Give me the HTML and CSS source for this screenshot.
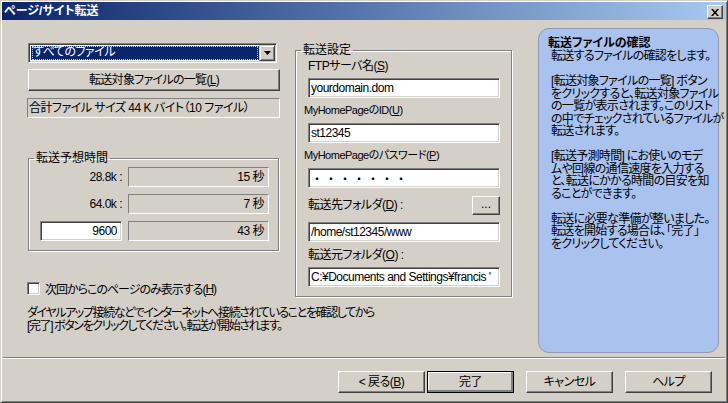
FILE: index.html
```html
<!DOCTYPE html>
<html lang="ja">
<head>
    <meta charset="UTF-8">
    <title>ページ/サイト転送</title>
    <link rel="stylesheet" href="styles.css">
</head>
<body>
    <div class="window">
        <div class="titlebar">
            <span class="title">ページ/サイト転送</span>
            <span class="close">
                <svg width="8" height="7" viewBox="0 0 8 7"><path d="M0 0h2l2 2.5L6 0h2L5 3.5 8 7H6L4 4.5 2 7H0l3-3.5z" fill="#000"/></svg>
            </span>
        </div>

        <div class="body">
            <div class="main">
                <div class="upper">
                    <div class="left-col">
                        <div class="combo">
                            <span class="combo-value"><span class="combo-focus">すべてのファイル</span></span>
                            <span class="combo-arrow">
                                <svg width="7" height="4" viewBox="0 0 7 4"><path d="M0 0h7L3.5 4z" fill="#000"/></svg>
                            </span>
                        </div>
                        <button class="btn btn-list">転送対象ファイルの一覧(<u>L</u>)</button>
                        <div class="summary">合計ファイル サイズ 44 K バイト（10 ファイル）</div>

                        <fieldset class="group estimate">
                            <legend>転送予想時間</legend>
                            <div class="est-row">
                                <span class="est-label">28.8k :</span>
                                <span class="est-value">15 秒</span>
                            </div>
                            <div class="est-row">
                                <span class="est-label">64.0k :</span>
                                <span class="est-value">7 秒</span>
                            </div>
                            <div class="est-row">
                                <input class="field est-input" type="text" value="9600">
                                <span class="est-value">43 秒</span>
                            </div>
                        </fieldset>

                        <label class="check">
                            <span class="check-box"></span>
                            次回からこのページのみ表示する(<u>H</u>)
                        </label>
                    </div>

                    <fieldset class="group settings">
                        <legend>転送設定</legend>
                        <div class="lbl">FTPサーバ名(<u>S</u>)</div>
                        <input class="field" type="text" value="yourdomain.dom">
                        <div class="lbl lbl-small">MyHomePageのID(<u>U</u>)</div>
                        <input class="field" type="text" value="st12345">
                        <div class="lbl lbl-small">MyHomePageのパスワード(<u>P</u>)</div>
                        <input class="field field-pass" type="text" value="・・・・・・・">
                        <div class="lbl-row">
                            <span class="lbl">転送先フォルダ(<u>D</u>) :</span>
                            <button class="btn btn-browse">...</button>
                        </div>
                        <input class="field" type="text" value="/home/st12345/www">
                        <div class="lbl">転送元フォルダ(<u>O</u>) :</div>
                        <input class="field" type="text" value="C:¥Documents and Settings¥francis '">
                    </fieldset>
                </div>

                <p class="note">ダイヤルアップ接続などでインターネットへ接続されていることを確認してから<br>[完了] ボタンをクリックしてください。転送が開始されます。</p>
            </div>

            <div class="help">
                <h2>転送ファイルの確認</h2>
                <p>転送するファイルの確認をします。</p>
                <p>[転送対象ファイルの一覧] ボタン<br>をクリックすると、転送対象ファイル<br>の一覧が表示されます。このリスト<br>の中でチェックされているファイルが<br>転送されます。</p>
                <p>[転送予測時間] にお使いのモデ<br>ムや回線の通信速度を入力する<br>と、転送にかかる時間の目安を知<br>ることができます。</p>
                <p>転送に必要な準備が整いました。<br>転送を開始する場合は、「完了」<br>をクリックしてください。</p>
            </div>
        </div>

        <div class="separator"></div>

        <div class="buttons">
            <button class="btn btn-nav">&lt; 戻る(<u>B</u>)</button>
            <button class="btn btn-nav btn-default">完了</button>
            <button class="btn btn-nav btn-gap">キャンセル</button>
            <button class="btn btn-nav btn-gap">ヘルプ</button>
        </div>
    </div>
</body>
</html>
```

FILE: styles.css
```css
:root {
    --face: #d4d0c8;
    --shadow: #808080;
    --dark: #404040;
    --help-bg: #a9c3ee;
}

* {
    margin: 0;
    padding: 0;
    box-sizing: border-box;
}

body {
    background: var(--face);
    font-family: 'Liberation Sans', 'Noto Sans CJK JP', sans-serif;
    font-size: 12px;
    font-feature-settings: "palt";
    letter-spacing: -0.5px;
    color: #000;
}

u {
    text-decoration: underline;
    text-underline-offset: 1px;
}

/* ウィンドウ枠 */
.window {
    width: 728px;
    height: 403px;
    background: var(--face);
    border: 1px solid;
    border-color: var(--face) var(--dark) var(--dark) var(--face);
    box-shadow: inset 1px 1px 0 #fff, inset -1px -1px 0 var(--shadow);
    padding: 1px;
    display: flex;
    flex-direction: column;
}

.titlebar {
    height: 18px;
    background: linear-gradient(90deg, #0a246a, #a6caf0);
    display: flex;
    justify-content: space-between;
    align-items: flex-start;
    padding: 0 3px 0 2px;
}

.title {
    color: #fff;
    font-weight: bold;
    line-height: 18px;
    letter-spacing: 0;
}

.close {
    width: 16px;
    height: 14px;
    margin-top: 3px;
    background: var(--face);
    border: 1px solid;
    border-color: #fff var(--dark) var(--dark) #fff;
    box-shadow: inset -1px -1px 0 var(--shadow);
    display: flex;
    align-items: center;
    justify-content: center;
}

/* 本体 */
.body {
    height: 337px;
    display: flex;
    padding: 8px 0 0 25px;
}

.main {
    width: 486px;
    padding-top: 15px;
}

.upper {
    display: flex;
    align-items: flex-start;
}

.left-col {
    width: 253px;
}

/* コンボボックス */
.combo {
    width: 249px;
    height: 20px;
    margin-left: 1px;
    background: #fff;
    border: 1px solid;
    border-color: var(--shadow) #fff #fff var(--shadow);
    box-shadow: inset 1px 1px 0 var(--dark), inset -1px -1px 0 var(--face);
    display: flex;
    padding: 2px;
}

.combo-value {
    flex: 1;
    background: #0a246a;
    padding: 0 1px;
}

.combo-focus {
    display: block;
    height: 100%;
    color: #fff;
    line-height: 13px;
    outline: 1px dotted #d4d0c8;
    outline-offset: -1px;
    padding-left: 1px;
}

.combo-arrow {
    width: 16px;
    background: var(--face);
    border: 1px solid;
    border-color: var(--face) var(--dark) var(--dark) var(--face);
    box-shadow: inset 1px 1px 0 #fff, inset -1px -1px 0 var(--shadow);
    display: flex;
    align-items: center;
    justify-content: center;
    margin: -1px -1px -1px 0;
}

/* ボタン */
.btn {
    font: inherit;
    letter-spacing: inherit;
    font-feature-settings: "palt";
    color: #000;
    background: var(--face);
    border: 1px solid;
    border-color: #fff var(--dark) var(--dark) #fff;
    box-shadow: inset -1px -1px 0 var(--shadow), inset 1px 1px 0 var(--face);
    display: flex;
    align-items: center;
    justify-content: center;
    line-height: 14px;
}

.btn-list {
    width: 252px;
    height: 22px;
    margin: 6px 0 0 1px;
    letter-spacing: -0.7px;
}

.summary {
    height: 20px;
    margin-top: 7px;
    line-height: 18px;
    padding-left: 1px;
    border: 1px solid;
    border-color: var(--shadow) #fff #fff var(--shadow);
    white-space: nowrap;
}

/* グループ枠 */
.group {
    border: 1px solid var(--shadow);
    box-shadow: inset 1px 1px 0 #fff, 1px 1px 0 #fff;
    min-inline-size: 0;
}

.group legend {
    line-height: 14px;
    padding: 0 2px;
    margin-left: -6px;
    letter-spacing: 0;
}

.estimate {
    width: 251px;
    margin: 33px 0 0 1px;
    padding: 2px 9px 9px 11px;
}

.est-row {
    display: flex;
    align-items: center;
    height: 20px;
}

.est-row + .est-row {
    margin-top: 7px;
}

.est-label {
    width: 82px;
    text-align: right;
}

.est-value {
    width: 141px;
    height: 20px;
    margin-left: 6px;
    border: 1px solid;
    border-color: var(--shadow) #fff #fff var(--shadow);
    text-align: right;
    line-height: 18px;
    padding-right: 4px;
}

.field {
    display: block;
    font: inherit;
    letter-spacing: inherit;
    font-feature-settings: "palt";
    color: #000;
    background: #fff;
    height: 20px;
    border: 1px solid;
    border-color: var(--shadow) #fff #fff var(--shadow);
    box-shadow: inset 1px 1px 0 var(--dark), inset -1px -1px 0 var(--face);
    padding: 0 2px;
    outline: none;
}

.est-input {
    width: 82px;
    text-align: right;
    padding-right: 4px;
}

/* チェックボックス */
.check {
    display: flex;
    align-items: center;
    height: 13px;
    margin-top: 31px;
    white-space: nowrap;
    letter-spacing: -1px;
}

.check-box {
    width: 13px;
    height: 13px;
    margin-right: 5px;
    background: #fff;
    border: 1px solid;
    border-color: var(--shadow) #fff #fff var(--shadow);
    box-shadow: inset 1px 1px 0 var(--dark), inset -1px -1px 0 var(--face);
}

/* 転送設定 */
.settings {
    width: 217px;
    margin-left: 15px;
    padding: 2px 12px 9px 11px;
}

.settings .field {
    width: 192px;
    margin-left: 1px;
}

.lbl {
    line-height: 14px;
    white-space: nowrap;
}

.settings > .lbl {
    margin-left: 1px;
}

.lbl-small {
    font-size: 11px;
    margin-left: -3px !important;
}

.settings .lbl + .field {
    margin-top: 5px;
}

.settings .field + .lbl {
    margin-top: 5px;
}

.settings .lbl-small + .field {
    margin-top: 6px;
}

.field-pass {
    font-feature-settings: normal;
    letter-spacing: 2px;
}

.lbl-row {
    display: flex;
    justify-content: space-between;
    align-items: center;
    height: 22px;
    margin: 6px 0 6px 1px;
}

.btn-browse {
    width: 28px;
    height: 19px;
    margin-right: -1px;
    line-height: 10px;
    align-items: flex-end;
    padding-bottom: 5px;
    letter-spacing: 0;
}

.settings .lbl-row + .field + .lbl {
    margin-top: 6px;
}

.note {
    margin-top: 10px;
    line-height: 13px;
    white-space: nowrap;
    letter-spacing: -1.4px;
}

/* ヘルプパネル */
.help {
    width: 181px;
    height: 325px;
    margin-left: 25px;
    background: var(--help-bg);
    border: 1px solid #8c9ab8;
    border-radius: 11px;
    padding: 7px 4px 0 9px;
}

.help h2 {
    font-size: 12px;
    font-weight: bold;
    line-height: 14px;
    letter-spacing: 0;
}

.help p {
    line-height: 12.5px;
    margin-left: 3px;
    margin-bottom: 12.5px;
    white-space: nowrap;
    letter-spacing: -0.7px;
}

/* 下部ボタン */
.separator {
    height: 2px;
    margin: 0 1px;
    border-top: 1px solid var(--shadow);
    border-bottom: 1px solid #fff;
}

.buttons {
    display: flex;
    justify-content: flex-end;
    padding: 12px 14px 0 0;
}

.btn-nav {
    width: 87px;
    height: 22px;
}

.btn-default {
    margin-left: 2px;
    outline: 1px solid #000;
    outline-offset: -1px;
    box-shadow: inset -2px -2px 0 var(--shadow), inset 1px 1px 0 #fff;
}

.btn-gap {
    margin-left: 12px;
}
```
